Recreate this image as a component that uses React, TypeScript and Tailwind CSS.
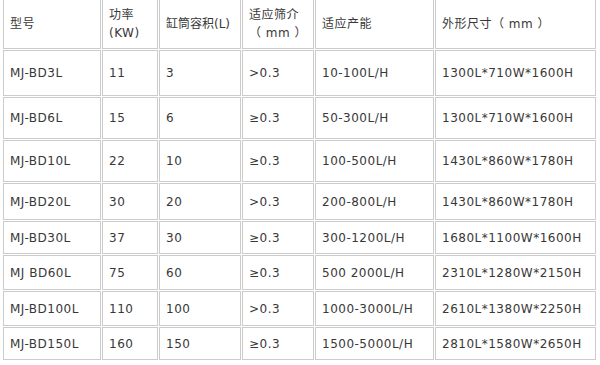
const rows = [
  { model: 'MJ-BD3L', kw: '11', vol: '3', mesh: '>0.3', cap: '10-100L/H', size: '1300L*710W*1600H', h: 'h-[46px]' },
  { model: 'MJ-BD6L', kw: '15', vol: '6', mesh: '≥0.3', cap: '50-300L/H', size: '1300L*710W*1600H', h: 'h-[42px]' },
  { model: 'MJ-BD10L', kw: '22', vol: '10', mesh: '≥0.3', cap: '100-500L/H', size: '1430L*860W*1780H', h: 'h-[42px]' },
  { model: 'MJ-BD20L', kw: '30', vol: '20', mesh: '>0.3', cap: '200-800L/H', size: '1430L*860W*1780H', h: 'h-[37px]' },
  { model: 'MJ-BD30L', kw: '37', vol: '30', mesh: '≥0.3', cap: '300-1200L/H', size: '1680L*1100W*1600H', h: 'h-[33px]' },
  { model: 'MJ BD60L', kw: '75', vol: '60', mesh: '≥0.3', cap: '500 2000L/H', size: '2310L*1280W*2150H', h: 'h-[35px]' },
  { model: 'MJ-BD100L', kw: '110', vol: '100', mesh: '>0.3', cap: '1000-3000L/H', size: '2610L*1380W*2250H', h: 'h-[35px]' },
  { model: 'MJ-BD150L', kw: '160', vol: '150', mesh: '≥0.3', cap: '1500-5000L/H', size: '2810L*1580W*2650H', h: 'h-[33px]' },
];

const cell = 'border border-[#cccccc] pl-[6px] pr-[2px] align-middle';

export default function App() {
  return (
    <div className="w-[600px] h-[365px] overflow-hidden bg-white">
      <table
        className="ml-[2px] -mt-[2px] border-separate border-spacing-[1px] table-fixed text-[12px] text-[#383838] tracking-[0.5px]"
        style={{ fontFamily: '"DejaVu Sans", "Noto Sans CJK SC", sans-serif' }}
      >
        <colgroup>
          <col className="w-[98px]" />
          <col className="w-[56px]" />
          <col className="w-[82px]" />
          <col className="w-[72px]" />
          <col className="w-[119px]" />
          <col className="w-[161px]" />
        </colgroup>
        <thead>
          <tr className="h-[50px] text-left font-normal leading-[18px]">
            <th className={`${cell} font-normal`}>型号</th>
            <th className={`${cell} font-normal`}>
              功率
              <br />
              (KW)
            </th>
            <th className={`${cell} font-normal tracking-normal`}>缸筒容积(L)</th>
            <th className={`${cell} font-normal`}>
              适应筛介
              <br />
              （ mm ）
            </th>
            <th className={`${cell} font-normal`}>适应产能</th>
            <th className={`${cell} font-normal`}>外形尺寸（ mm ）</th>
          </tr>
        </thead>
        <tbody>
          {rows.map((r) => (
            <tr key={r.model} className={r.h}>
              <td className={cell}>{r.model}</td>
              <td className={cell}>{r.kw}</td>
              <td className={cell}>{r.vol}</td>
              <td className={cell}>{r.mesh}</td>
              <td className={cell}>{r.cap}</td>
              <td className={cell}>{r.size}</td>
            </tr>
          ))}
        </tbody>
      </table>
    </div>
  );
}
